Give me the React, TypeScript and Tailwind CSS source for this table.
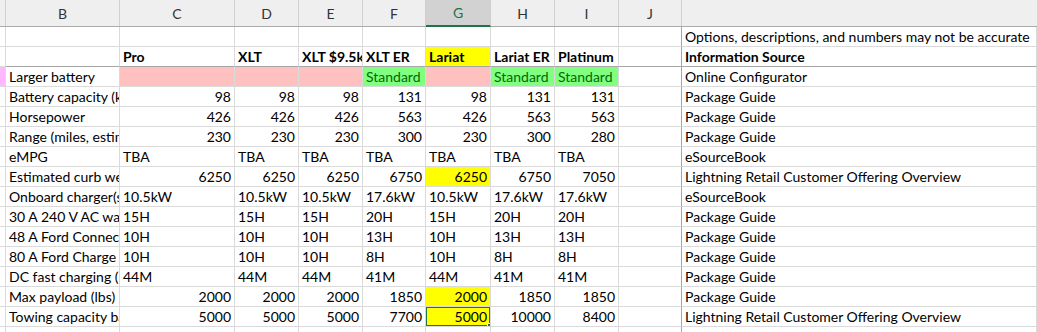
import React from "react";

type Cell = {
  t?: string;
  r?: boolean; // right aligned
  b?: boolean; // bold
  bg?: string; // tailwind bg class
  c?: string; // text color class
};

const cols = [
  "w-[6px]",
  "w-[114px]",
  "w-[115px]",
  "w-[64px]",
  "w-[64px]",
  "w-[63px]",
  "w-[65px]",
  "w-[64px]",
  "w-[64px]",
  "w-[63px]",
  "flex-1",
];
const letters = ["", "B", "C", "D", "E", "F", "G", "H", "I", "J", ""];

const P = "bg-[#ffc0c0]";
const G = "bg-[#80ff80]";
const Y = "bg-[#ffff00]";
const std: Cell = { t: "Standard", bg: G, c: "text-[#006b00]" };

const n = (t: string, bg?: string): Cell => ({ t, r: true, bg });
const s = (t: string, bg?: string): Cell => ({ t, bg });

const rows: Cell[][] = [
  [{}, {}, {}, {}, {}, {}, {}, {}, {}, {}, s("Options, descriptions, and numbers may not be accurate")],
  [
    {},
    {},
    { t: "Pro", b: true },
    { t: "XLT", b: true },
    { t: "XLT $9.5k", b: true },
    { t: "XLT ER", b: true },
    { t: "Lariat", b: true, bg: Y },
    { t: "Lariat ER", b: true },
    { t: "Platinum", b: true },
    {},
    { t: "Information Source", b: true },
  ],
  [{ bg: "bg-[#ffb8ff]" }, s("Larger battery"), { bg: P }, { bg: P }, { bg: P }, std, { bg: P }, std, std, {}, s("Online Configurator")],
  [{}, s("Battery capacity (kWh)"), n("98"), n("98"), n("98"), n("131"), n("98"), n("131"), n("131"), {}, s("Package Guide")],
  [{}, s("Horsepower"), n("426"), n("426"), n("426"), n("563"), n("426"), n("563"), n("563"), {}, s("Package Guide")],
  [{}, s("Range (miles, estimated)"), n("230"), n("230"), n("230"), n("300"), n("230"), n("300"), n("280"), {}, s("Package Guide")],
  [{}, s("eMPG"), s("TBA"), s("TBA"), s("TBA"), s("TBA"), s("TBA"), s("TBA"), s("TBA"), {}, s("eSourceBook")],
  [{}, s("Estimated curb weight (lbs)"), n("6250"), n("6250"), n("6250"), n("6750"), n("6250", Y), n("6750"), n("7050"), {}, s("Lightning Retail Customer Offering Overview")],
  [{}, s("Onboard charger(s)"), s("10.5kW"), s("10.5kW"), s("10.5kW"), s("17.6kW"), s("10.5kW"), s("17.6kW"), s("17.6kW"), {}, s("eSourceBook")],
  [{}, s("30 A 240 V AC wall charging"), s("15H"), s("15H"), s("15H"), s("20H"), s("15H"), s("20H"), s("20H"), {}, s("Package Guide")],
  [{}, s("48 A Ford Connected Charge Station"), s("10H"), s("10H"), s("10H"), s("13H"), s("10H"), s("13H"), s("13H"), {}, s("Package Guide")],
  [{}, s("80 A Ford Charge Station Pro"), s("10H"), s("10H"), s("10H"), s("8H"), s("10H"), s("8H"), s("8H"), {}, s("Package Guide")],
  [{}, s("DC fast charging (150 kW)"), s("44M"), s("44M"), s("44M"), s("41M"), s("44M"), s("41M"), s("41M"), {}, s("Package Guide")],
  [{}, s("Max payload (lbs)"), n("2000"), n("2000"), n("2000"), n("1850"), n("2000", Y), n("1850"), n("1850"), {}, s("Package Guide")],
  [{}, s("Towing capacity base"), n("5000"), n("5000"), n("5000"), n("7700"), n("5000", Y), n("10000"), n("8400"), {}, s("Lightning Retail Customer Offering Overview")],
  [{}, {}, {}, {}, {}, {}, {}, {}, {}, {}, {}],
];

export default function App() {
  return (
    <div
      className="w-[1037px] h-[332px] overflow-hidden bg-white text-black"
      style={{ fontFamily: "Lato, 'Open Sans', sans-serif" }}
    >
      {/* column header row */}
      <div className="flex h-[27px] bg-[#efefef] border-b border-[#ababab]">
        {cols.map((w, i) => (
          <div
            key={i}
            className={`${w} shrink-0 flex items-center justify-center text-[14px] ${
              i === 10 ? "" : "border-r border-[#d0d0d0]"
            } ${
              i === 6
                ? "bg-[#d2d2d2] text-[#217346] border-b-2 border-b-[#217346] -mb-px"
                : "text-[#333]"
            }`}
          >
            {letters[i]}
          </div>
        ))}
      </div>
      {rows.map((row, ri) => (
        <div key={ri} className="flex h-[20px]">
          {row.map((cell, ci) => {
            const borderB = ri === 1 && ci > 0 ? "border-b-[#a6a6a6]" : "border-b-[#dadada]";
            const borderR = ci === 9 ? "border-r-[#a6a6a6]" : "border-r-[#dadada]";
            const selected = ri === 14 && ci === 6;
            return (
              <div
                key={ci}
                className={`${cols[ci]} shrink-0 relative flex items-end border-b border-r ${borderB} ${borderR} ${
                  cell.bg ?? ""
                } ${cell.r ? "justify-end pr-[3px]" : "pl-[3px]"} ${
                  ci === 10 ? "overflow-visible" : "overflow-hidden"
                }`}
              >
                <span
                  className={`whitespace-nowrap text-[14px] leading-[18px] ${
                    cell.b ? "font-bold" : ""
                  } ${cell.c ?? ""}`}
                >
                  {cell.t ?? ""}
                </span>
                {selected && (
                  <>
                    <div className="absolute -left-px -top-px -right-px -bottom-px border-2 border-[#217346] pointer-events-none" />
                    <div className="absolute -right-[3px] -bottom-[3px] w-[6px] h-[6px] bg-[#217346] border border-white" />
                  </>
                )}
              </div>
            );
          })}
        </div>
      ))}
    </div>
  );
}
